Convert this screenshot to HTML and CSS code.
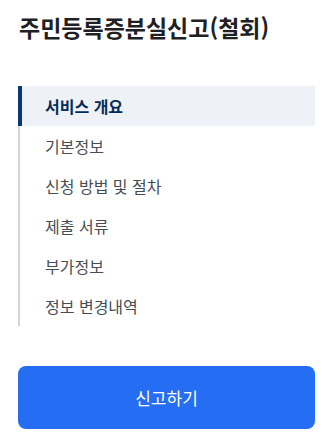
FILE: index.html
```html
<!DOCTYPE html>
<html lang="ko">
<head>
    <meta charset="UTF-8">
    <meta name="viewport" content="width=device-width, initial-scale=1.0">
    <title>주민등록증분실신고(철회)</title>
    <link rel="stylesheet" href="styles.css">
</head>
<body>
    <div class="container">
        <h1 class="page-title">주민등록증분실신고(철회)</h1>

        <nav class="side-menu">
            <ul>
                <li class="menu-item active"><a href="#">서비스 개요</a></li>
                <li class="menu-item"><a href="#">기본정보</a></li>
                <li class="menu-item"><a href="#">신청 방법 및 절차</a></li>
                <li class="menu-item"><a href="#">제출 서류</a></li>
                <li class="menu-item"><a href="#">부가정보</a></li>
                <li class="menu-item"><a href="#">정보 변경내역</a></li>
            </ul>
        </nav>

        <button type="button" class="apply-btn">신고하기</button>
    </div>
</body>
</html>
```

FILE: styles.css
```css
* {
    margin: 0;
    padding: 0;
    box-sizing: border-box;
    font-family: 'Noto Sans CJK KR', 'Noto Sans', sans-serif;
}

body {
    background-color: #fff;
    color: #1e2124;
}

.container {
    padding: 12px 7px 0 18px;
}

.page-title {
    font-size: 23px;
    font-weight: 700;
    line-height: 30px;
    color: #1e2124;
    margin-left: 1px;
}

.side-menu {
    margin-top: 44px;
}

.side-menu ul {
    list-style: none;
    border-left: 2px solid #cdd5de;
}

.menu-item a {
    display: block;
    height: 40px;
    line-height: 40px;
    padding-left: 25px;
    font-size: 16px;
    color: #464c53;
    text-decoration: none;
}

.menu-item.active {
    margin-left: -2px;
    border-left: 4px solid #063a74;
    background-color: #eef2f6;
}

.menu-item.active a {
    padding-left: 23px;
    font-weight: 700;
    color: #052b57;
}

.apply-btn {
    display: block;
    width: 100%;
    height: 63px;
    margin-top: 40px;
    border: none;
    border-radius: 8px;
    background-color: #256ef4;
    color: #fff;
    font-size: 17px;
    cursor: pointer;
}
```
